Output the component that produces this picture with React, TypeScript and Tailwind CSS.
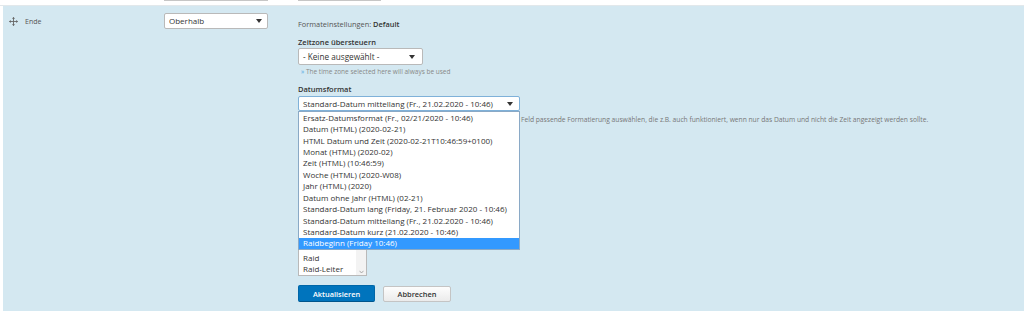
import React from "react";

const items = [
  "Ersatz-Datumsformat (Fr., 02/21/2020 - 10:46)",
  "Datum (HTML) (2020-02-21)",
  "HTML Datum und Zeit (2020-02-21T10:46:59+0100)",
  "Monat (HTML) (2020-02)",
  "Zeit (HTML) (10:46:59)",
  "Woche (HTML) (2020-W08)",
  "Jahr (HTML) (2020)",
  "Datum ohne Jahr (HTML) (02-21)",
  "Standard-Datum lang (Friday, 21. Februar 2020 - 10:46)",
  "Standard-Datum mittellang (Fr., 21.02.2020 - 10:46)",
  "Standard-Datum kurz (21.02.2020 - 10:46)",
  "Raidbeginn (Friday 10:46)",
];

function Arrow() {
  return (
    <svg width="6" height="4" viewBox="0 0 6 4" className="shrink-0">
      <path d="M0 0 L6 0 L3 4 Z" fill="#333" />
    </svg>
  );
}

function MoveIcon() {
  return (
    <svg width="9" height="9" viewBox="0 0 10 10" className="shrink-0">
      <path d="M5 0.5 V9.5 M0.5 5 H9.5" stroke="#666" strokeWidth="1" fill="none" />
      <path d="M5 0 L3.3 2 H6.7 Z M5 10 L3.3 8 H6.7 Z M0 5 L2 3.3 V6.7 Z M10 5 L8 3.3 V6.7 Z" fill="#666" />
    </svg>
  );
}

export default function App() {
  return (
    <div className="w-[1024px] h-[313px] bg-white overflow-hidden font-['Open_Sans','DejaVu_Sans',sans-serif] text-[#333]">
      <div className="h-[6px] border-b border-[#e2e8eb] flex items-start">
        <div className="ml-[164px] w-[104px] h-[1px] bg-[#c6c6c6]" />
        <div className="ml-[30px] w-[83px] h-[1px] bg-[#c6c6c6]" />
      </div>
      <div className="ml-[3px] h-[305px] bg-[#d4e8f1] flex">
        <div className="w-[161px] shrink-0">
          <div className="pl-[6px] pt-[7px] flex items-center gap-[7px] h-[24px] text-[7px] text-[#555] leading-[10px]">
            <MoveIcon />
            <span>Ende</span>
          </div>
        </div>
        <div className="w-[134px] shrink-0 pt-[7px]">
          <div className="w-[104px] h-[16px] bg-white border border-[#b9b9b9] rounded-[2px] flex items-center justify-between pl-[4px] pr-[5px] text-[8px] leading-[10px]">
            <span>Oberhalb</span>
            <Arrow />
          </div>
        </div>
        <div className="flex flex-col items-start">
          <div className="mt-[13px] text-[7.4px] leading-[10px] text-[#555]">
            Formateinstellungen: <span className="font-semibold text-[#333]">Default</span>
          </div>
          <div className="mt-[8px] text-[7.5px] leading-[10px] font-semibold text-[#333]">Zeitzone übersteuern</div>
          <div className="mt-[1px] w-[125px] h-[17px] bg-white border border-[#b9b9b9] rounded-[2px] flex items-center justify-between pl-[4px] pr-[7px] text-[8.2px] leading-[10px]">
            <span>- Keine ausgewählt -</span>
            <Arrow />
          </div>
          <div className="mt-[2px] text-[6.5px] leading-[9px] text-[#888] pl-[3px]">
            <span className="text-[#4aa3df]">»</span> The time zone selected here will always be used
          </div>
          <div className="mt-[8px] text-[7.5px] leading-[10px] font-semibold text-[#333]">Datumsformat</div>
          <div className="relative mt-[2px] w-[222px] h-[15px] bg-white border border-[#7fb1d9] rounded-[2px] flex items-center justify-between pl-[4px] pr-[6px] text-[8px] leading-[10px] z-10">
            <span>Standard-Datum mittellang (Fr., 21.02.2020 - 10:46)</span>
            <Arrow />
            <div className="absolute left-[-1px] top-[14px] w-[222px] h-[139px] bg-white border border-[#8aa9c6] flex flex-col">
              {items.map((t, i) => (
                <div
                  key={t}
                  className={
                    "h-[11.45px] flex items-center pl-[4px] text-[8px] leading-[10px] whitespace-nowrap " +
                    (i === items.length - 1 ? "bg-[#3399ff] text-white" : "text-[#333]")
                  }
                >
                  {t}
                </div>
              ))}
            </div>
          </div>
          <div className="mt-[3.5px] text-[6.7px] leading-[9px] text-[#777] whitespace-nowrap pl-[223px]">
            Feld passende Formatierung auswählen, die z.B. auch funktioniert, wenn nur das Datum und nicht die Zeit angezeigt werden sollte.
          </div>
          <div className="mt-[117.5px] w-[69px] h-[35px] bg-white border border-[#b9b9b9] flex">
            <div className="flex-1 flex flex-col text-[8px] leading-[10px] text-[#333]">
              <div className="h-[11px] flex items-center pl-[4px]">Termin</div>
              <div className="h-[11.5px] flex items-center pl-[4px]">Raid</div>
              <div className="h-[11.5px] flex items-center pl-[4px]">Raid-Leiter</div>
            </div>
            <div className="w-[10px] bg-[#f3f3f3] flex flex-col justify-end items-center pb-[1px]">
              <svg width="5" height="4" viewBox="0 0 5 4">
                <path d="M0.5 0.8 L2.5 3 L4.5 0.8" stroke="#999" strokeWidth="0.8" fill="none" />
              </svg>
            </div>
          </div>
          <div className="mt-[9px] flex items-start">
            <div className="w-[77px] h-[17px] bg-[#0074bd] border border-[#0066a8] border-b-[#00558c] rounded-[2px] flex items-center justify-center text-white text-[7.4px] font-semibold leading-[10px]">
              Aktualisieren
            </div>
            <div className="ml-[8px] mt-[1px] w-[68px] h-[16px] bg-gradient-to-b from-[#fdfdfd] to-[#ebebeb] border border-[#c4c4c4] rounded-[2px] flex items-center justify-center text-[#333] text-[7.4px] font-semibold leading-[10px]">
              Abbrechen
            </div>
          </div>
        </div>
      </div>
    </div>
  );
}
